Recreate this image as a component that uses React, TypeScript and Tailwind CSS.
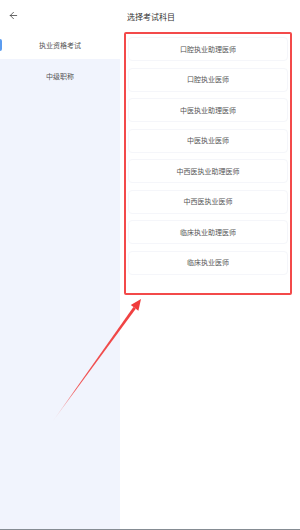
import { ArrowLeft } from "lucide-react";

const subjects = [
  "口腔执业助理医师",
  "口腔执业医师",
  "中医执业助理医师",
  "中医执业医师",
  "中西医执业助理医师",
  "中西医执业医师",
  "临床执业助理医师",
  "临床执业医师",
];

export default function App() {
  return (
    <div
      className="relative flex h-[530px] w-[300px] flex-col overflow-hidden bg-white"
      style={{ fontFamily: '"Noto Sans CJK SC", "Noto Sans", sans-serif' }}
    >
      {/* Header */}
      <div className="flex h-[31px] shrink-0 items-center">
        <div className="flex w-[120px] items-center pl-[8px] pb-[1px]">
          <ArrowLeft size={11} strokeWidth={1.6} className="text-[#333]" />
        </div>
        <div className="pl-[7px] pt-[3px] text-[8px] text-[#333]">选择考试科目</div>
      </div>

      <div className="flex min-h-0 flex-1">
        {/* Sidebar */}
        <div className="flex w-[120px] shrink-0 flex-col bg-[#f1f4fd]">
          <div className="relative flex h-[28px] items-center justify-center bg-white text-[7px] text-[#555]">
            <span className="absolute left-0 top-[8px] h-[12px] w-[2px] rounded-r bg-[#5b9cf0]" />
            执业资格考试
          </div>
          <div className="flex h-[34px] items-center justify-center text-[7px] text-[#555]">
            中级职称
          </div>
        </div>

        {/* Subject list */}
        <div className="flex-1 pl-[4px] pr-[8px] pt-[1px]">
          <div className="flex flex-col gap-[6.5px] rounded-[2px] border-2 border-[#f34a4a] pb-[18px] pl-[2px] pr-[2px] pt-[3px]">
            {subjects.map((s) => (
              <div
                key={s}
                className="flex h-[24px] items-center justify-center rounded-[4px] border border-[#f5f6fa] bg-white text-[7px] text-[#555]"
              >
                {s}
              </div>
            ))}
          </div>
        </div>
      </div>

      <div className="h-[1px] shrink-0 bg-[#858c93]" />

      {/* Annotation arrow */}
      <svg className="pointer-events-none absolute left-0 top-0" width="300" height="530">
        <defs>
          <linearGradient id="fade" x1="53" y1="421" x2="141" y2="299" gradientUnits="userSpaceOnUse">
            <stop offset="0" stopColor="#f04545" stopOpacity="0.1" />
            <stop offset="0.25" stopColor="#f04545" stopOpacity="0.9" />
            <stop offset="1" stopColor="#f03c3c" />
          </linearGradient>
        </defs>
        <polygon points="53,421 135.8,308.8 133.4,307" fill="url(#fade)" />
        <polygon points="141,299 138.4,310.7 130.8,305.1" fill="#f03c3c" />
      </svg>
    </div>
  );
}
